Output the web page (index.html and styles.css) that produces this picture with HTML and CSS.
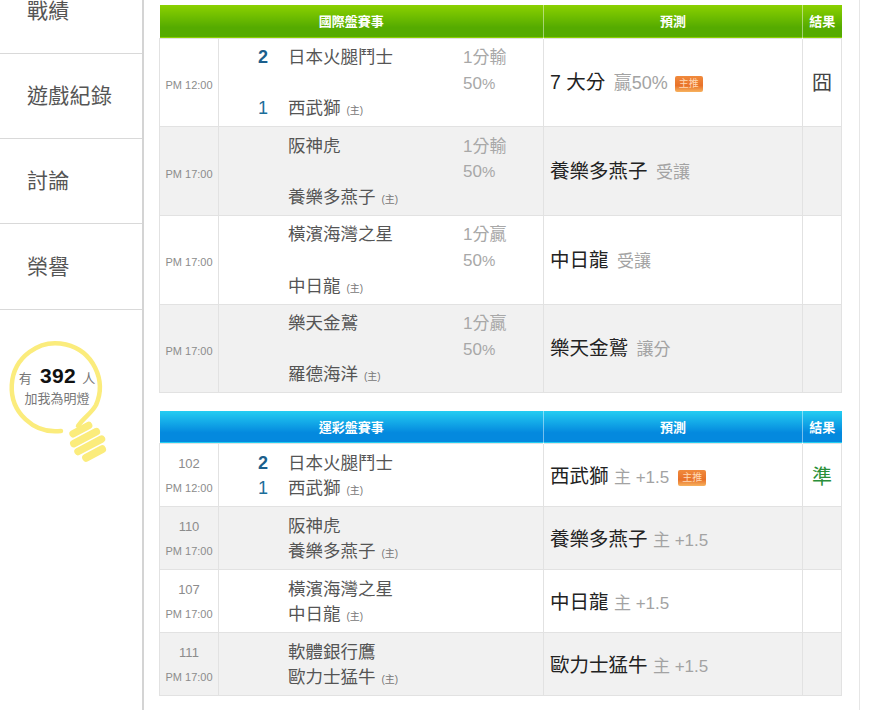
FILE: index.html
```html
<!DOCTYPE html>
<html lang="zh-Hant">
<head>
<meta charset="utf-8">
<title>戰績</title>
<link rel="stylesheet" href="styles.css">
</head>
<body>
<div class="page">
  <aside class="side">
    <nav class="nav">
      <a class="nav-item">戰績</a>
      <a class="nav-item">遊戲紀錄</a>
      <a class="nav-item">討論</a>
      <a class="nav-item">榮譽</a>
    </nav>
    <div class="bulb">
      <svg class="bulb-art" width="120" height="135" viewBox="0 0 120 135" aria-hidden="true">
        <path class="bulb-ring" d="M61 96 A44 44 0 1 1 96 70 C91 79 84 82 78 91"/>
        <g class="bulb-base" transform="rotate(-28 88 107)">
          <rect x="75" y="89" width="25" height="7.5" rx="3.7"/>
          <rect x="71" y="98" width="33" height="7.5" rx="3.7"/>
          <rect x="71" y="107" width="34" height="7.5" rx="3.7"/>
          <rect x="75" y="116" width="26" height="8" rx="4"/>
        </g>
      </svg>
      <div class="bulb-line"><span>有</span><b>392</b><span>人</span></div>
      <div class="bulb-sub">加我為明燈</div>
    </div>
  </aside>
  <main class="main">
    <table class="board green">
      <colgroup><col class="c-time"><col class="c-team"><col class="c-pick"><col class="c-res"></colgroup>
      <thead><tr><th colspan="2">國際盤賽事</th><th>預測</th><th>結果</th></tr></thead>
      <tbody>
        <tr>
          <td class="time">PM 12:00</td>
          <td><div class="teams tall">
            <b class="score s1">2</b><span class="name n1">日本火腿鬥士</span><span class="odds o1">1分輸</span>
            <span class="odds o2">50<small>%</small></span>
            <span class="score s3">1</span><span class="name n3">西武獅 <i>(主)</i></span>
          </div></td>
          <td class="pick">7 大分 <span class="mute big">贏50%</span><em class="tag">主推</em></td>
          <td class="res">囧</td>
        </tr>
        <tr>
          <td class="time">PM 17:00</td>
          <td><div class="teams tall">
            <span class="name n1">阪神虎</span><span class="odds o1">1分輸</span>
            <span class="odds o2">50<small>%</small></span>
            <span class="name n3">養樂多燕子 <i>(主)</i></span>
          </div></td>
          <td class="pick">養樂多燕子 <span class="mute">受讓</span></td>
          <td class="res"></td>
        </tr>
        <tr>
          <td class="time">PM 17:00</td>
          <td><div class="teams tall">
            <span class="name n1">橫濱海灣之星</span><span class="odds o1">1分贏</span>
            <span class="odds o2">50<small>%</small></span>
            <span class="name n3">中日龍 <i>(主)</i></span>
          </div></td>
          <td class="pick">中日龍 <span class="mute">受讓</span></td>
          <td class="res"></td>
        </tr>
        <tr>
          <td class="time">PM 17:00</td>
          <td><div class="teams tall">
            <span class="name n1">樂天金鷲</span><span class="odds o1">1分贏</span>
            <span class="odds o2">50<small>%</small></span>
            <span class="name n3">羅德海洋 <i>(主)</i></span>
          </div></td>
          <td class="pick">樂天金鷲 <span class="mute">讓分</span></td>
          <td class="res"></td>
        </tr>
      </tbody>
    </table>
    <table class="board blue">
      <colgroup><col class="c-time"><col class="c-team"><col class="c-pick"><col class="c-res"></colgroup>
      <thead><tr><th colspan="2">運彩盤賽事</th><th>預測</th><th>結果</th></tr></thead>
      <tbody>
        <tr>
          <td class="time"><div class="num">102</div>PM 12:00</td>
          <td><div class="teams short">
            <b class="score">2</b><span class="name">日本火腿鬥士</span>
            <span class="score">1</span><span class="name">西武獅 <i>(主)</i></span>
          </div></td>
          <td class="pick">西武獅 <span class="mute">主 +1.5</span><em class="tag wide">主推</em></td>
          <td class="res good">準</td>
        </tr>
        <tr>
          <td class="time"><div class="num">110</div>PM 17:00</td>
          <td><div class="teams short">
            <span class="score"></span><span class="name">阪神虎</span>
            <span class="score"></span><span class="name">養樂多燕子 <i>(主)</i></span>
          </div></td>
          <td class="pick">養樂多燕子 <span class="mute">主 +1.5</span></td>
          <td class="res"></td>
        </tr>
        <tr>
          <td class="time"><div class="num">107</div>PM 17:00</td>
          <td><div class="teams short">
            <span class="score"></span><span class="name">橫濱海灣之星</span>
            <span class="score"></span><span class="name">中日龍 <i>(主)</i></span>
          </div></td>
          <td class="pick">中日龍 <span class="mute">主 +1.5</span></td>
          <td class="res"></td>
        </tr>
        <tr>
          <td class="time"><div class="num">111</div>PM 17:00</td>
          <td><div class="teams short">
            <span class="score"></span><span class="name">軟體銀行鷹</span>
            <span class="score"></span><span class="name">歐力士猛牛 <i>(主)</i></span>
          </div></td>
          <td class="pick">歐力士猛牛 <span class="mute">主 +1.5</span></td>
          <td class="res"></td>
        </tr>
      </tbody>
    </table>
  </main>
</div>
</body>
</html>
```
FILE: styles.css
```css
* { box-sizing: border-box; }
html, body { margin: 0; height: 710px; overflow: hidden; background: #fff; }
body {
  font-family: "Liberation Sans", "Noto Sans CJK TC", sans-serif;
  color: #333;
}
.page { display: flex; height: 710px; }

.side {
  width: 144px;
  flex: none;
  border-right: 2px solid #d4d4d4;
}
.nav { margin-top: -31.5px; }
.nav-item {
  display: flex;
  align-items: center;
  height: 85.3px;
  padding: 0 0 4px 27px;
  border-bottom: 1px solid #d9d9d9;
  font-size: 21px;
  color: #555;
  letter-spacing: 0.3px;
}

.bulb {
  position: relative;
  height: 130px;
  margin-top: 25.5px;
  text-align: center;
  color: #777;
}
.bulb-art { position: absolute; left: 0; top: 0; }
.bulb-ring { fill: none; stroke: #fbec7c; stroke-width: 4.5; stroke-linecap: round; }
.bulb-base rect { fill: #fbec7c; }
.bulb-line {
  position: relative;
  width: 114px;
  padding-top: 27px;
  height: 54px;
  font-size: 13px;
  line-height: 27px;
  white-space: nowrap;
}
.bulb-line b { font-size: 21px; color: #111; margin: 0 6px 0 8px; letter-spacing: 0.4px; }
.bulb-sub {
  position: relative;
  width: 114px;
  padding-top: 1px;
  font-size: 13px;
  line-height: 18px;
}

.main {
  width: 716px;
  flex: none;
  padding: 5px 0 0 15px;
  border-right: 1px solid #e6e6e6;
}
.board {
  width: 682px;
  table-layout: fixed;
  border-collapse: collapse;
  margin-bottom: 18px;
}
.c-time { width: 59px; }
.c-team { width: 325px; }
.c-pick { width: 259px; }
.c-res { width: 39px; }

.board th {
  height: 33px;
  padding: 0 0 2px;
  color: #fff;
  font-size: 13px;
  font-weight: bold;
  border-left: 1px solid rgba(255,255,255,.45);
}
.board th:first-child { border-left: 0; }
.blue th { height: 32px; }
.green thead tr { background: linear-gradient(#8bd100, #55ab00 70%); border-bottom: 1px solid #b2e36a; }
.blue thead tr { background: linear-gradient(#24cdf2, #0489de 70%); border-bottom: 1px solid #7fcbf3; }

.board td {
  padding: 0;
  border: 1px solid #e2e2e2;
  vertical-align: middle;
}
.board tbody tr:nth-child(even) { background: #f1f1f1; }
.green tbody tr { height: 88.7px; }
.blue tbody tr { height: 63px; }

.time {
  text-align: center;
  font-size: 11px;
  color: #8c8c8c;
  line-height: 24px;
  white-space: nowrap;
}
.green .time { padding-top: 5px; }
.blue .time { padding-top: 3px; }
.num { font-size: 13px; }

.teams {
  display: grid;
  grid-template-columns: 49px 1fr;
  column-gap: 20px;
  color: #555;
  font-size: 17.5px;
}
.teams.short { grid-auto-rows: 25px; line-height: 25px; padding-top: 2px; }
.teams.tall {
  grid-template-columns: 49px 155px 1fr;
  grid-template-rows: repeat(3, 25.6px);
  line-height: 25.6px;
  padding-top: 2px;
}
.score { text-align: right; color: #1b6e9a; font-size: 18px; font-weight: normal; }
b.score { color: #1c5f8c; font-weight: bold; }
.name { white-space: nowrap; }
.name i { font-style: normal; font-size: 10px; color: #777; margin-left: 1px; }
.s1, .n1, .o1 { grid-row: 1; }
.o2 { grid-row: 2; }
.s3, .n3 { grid-row: 3; }
.s1, .s3 { grid-column: 1; }
.n1, .n3 { grid-column: 2; }
.o1, .o2 { grid-column: 3; }
.odds { color: #a8a8a8; font-size: 17px; white-space: nowrap; }
.odds small { font-size: 15px; }

.pick {
  padding: 0 0 3px 6px !important;
  font-size: 19.5px;
  color: #222;
  white-space: nowrap;
}
.blue .pick { padding: 0 0 0 6px !important; }
.mute { color: #a3a3a3; font-size: 17px; margin-left: 3px; }
.blue .mute { margin-left: 0; }
.mute.big { font-size: 18px; }
.tag {
  display: inline-block;
  width: 28px;
  height: 16px;
  margin-left: 7px;
  border-radius: 2px;
  background: linear-gradient(#f08a3c, #e8722a 60%, #f7b25e);
  color: #ffd9b5;
  font-size: 10px;
  font-style: normal;
  line-height: 16px;
  text-align: center;
  vertical-align: 2px;
}
.tag.wide { margin-left: 9px; }
.res { text-align: center; font-size: 20px; color: #444; padding-bottom: 2px !important; }
.res.good { padding: 1px 0 0 !important; color: #2a8f3a; }
```
